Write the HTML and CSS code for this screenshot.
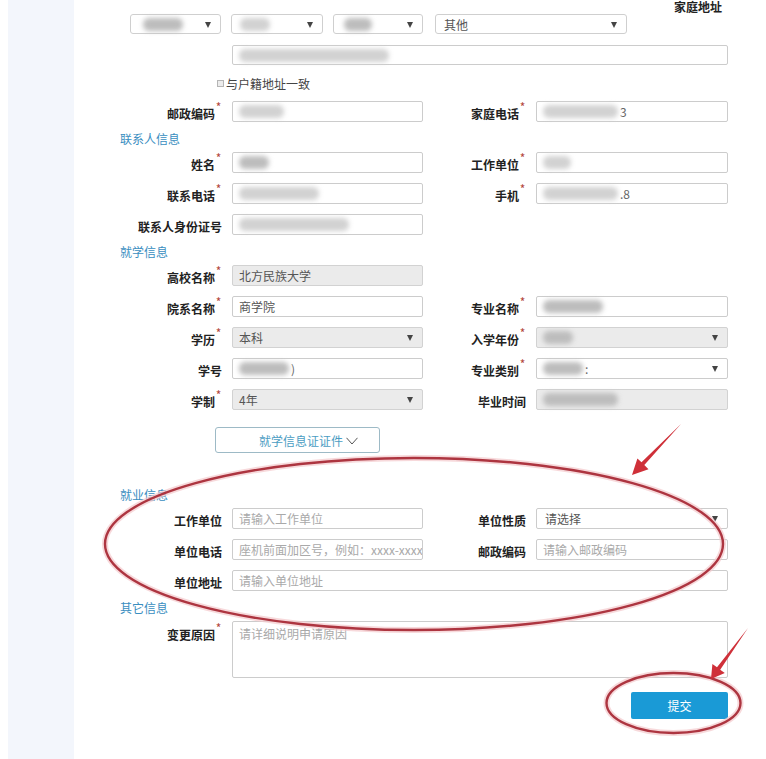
FILE: index.html
```html
<!DOCTYPE html>
<html lang="zh-CN">
<head>
<meta charset="utf-8">
<title>变更申请</title>
<link rel="stylesheet" href="styles.css">
</head>
<body>
<div class="page">
  <aside class="strip"></aside>
  <main class="form">
    <div class="top-label">家庭地址</div>

    <div class="selects">
      <div class="sel s1"><span class="blur w40"></span></div>
      <div class="sel s2"><span class="blur w30 light"></span></div>
      <div class="sel s3"><span class="blur w28"></span></div>
      <div class="sel s4">其他</div>
    </div>

    <div class="field addr"><span class="blur w150 light"></span></div>

    <div class="check-row"><span class="box"></span><span>与户籍地址一致</span></div>

    <div class="row first">
      <label class="lbl">邮政编码<span class="req">*</span></label>
      <div class="field"><span class="blur w45 light"></span></div>
      <label class="lbl">家庭电话<span class="req">*</span></label>
      <div class="field"><span class="blur w75 light"></span><span class="tail">3</span></div>
    </div>

    <div class="sec">联系人信息</div>
    <div class="row">
      <label class="lbl">姓名<span class="req">*</span></label>
      <div class="field"><span class="blur w30"></span></div>
      <label class="lbl">工作单位<span class="req">*</span></label>
      <div class="field"><span class="blur w28 light"></span></div>
    </div>
    <div class="row">
      <label class="lbl">联系电话<span class="req">*</span></label>
      <div class="field"><span class="blur w80 light"></span></div>
      <label class="lbl">手机<span class="req">*</span></label>
      <div class="field"><span class="blur w75 light"></span><span class="tail">.8</span></div>
    </div>
    <div class="row">
      <label class="lbl">联系人身份证号</label>
      <div class="field"><span class="blur w110 light"></span></div>
    </div>

    <div class="sec">就学信息</div>
    <div class="row">
      <label class="lbl">高校名称<span class="req">*</span></label>
      <div class="field dis">北方民族大学</div>
    </div>
    <div class="row">
      <label class="lbl">院系名称<span class="req">*</span></label>
      <div class="field">商学院</div>
      <label class="lbl">专业名称<span class="req">*</span></label>
      <div class="field"><span class="blur w60"></span></div>
    </div>
    <div class="row">
      <label class="lbl">学历<span class="req">*</span></label>
      <div class="field dis select">本科</div>
      <label class="lbl">入学年份<span class="req">*</span></label>
      <div class="field dis select"><span class="blur w30"></span></div>
    </div>
    <div class="row">
      <label class="lbl">学号</label>
      <div class="field"><span class="blur w50"></span><span class="tail">)</span></div>
      <label class="lbl">专业类别<span class="req">*</span></label>
      <div class="field select"><span class="blur w40"></span><span class="tail">:</span></div>
    </div>
    <div class="row">
      <label class="lbl">学制<span class="req">*</span></label>
      <div class="field dis select">4年</div>
      <label class="lbl">毕业时间</label>
      <div class="field dis"><span class="blur w75"></span></div>
    </div>

    <div class="toggle-wrap">
      <button class="toggle" type="button">就学信息证证件<svg class="chev" width="12" height="8" viewBox="0 0 12 8"><polyline points="0.5,0.8 6,7 11.5,0.8" fill="none" stroke="#555" stroke-width="1"/></svg></button>
    </div>

    <div class="sec emp">就业信息</div>
    <div class="row">
      <label class="lbl">工作单位</label>
      <div class="field"><span class="ph">请输入工作单位</span></div>
      <label class="lbl">单位性质</label>
      <div class="field select"><span class="val">请选择</span></div>
    </div>
    <div class="row">
      <label class="lbl">单位电话</label>
      <div class="field clip"><span class="ph">座机前面加区号，例如：xxxx-xxxx</span></div>
      <label class="lbl">邮政编码</label>
      <div class="field"><span class="ph">请输入邮政编码</span></div>
    </div>
    <div class="row">
      <label class="lbl">单位地址</label>
      <div class="field span3"><span class="ph">请输入单位地址</span></div>
    </div>

    <div class="sec">其它信息</div>
    <div class="row area">
      <label class="lbl">变更原因<span class="req">*</span></label>
      <div class="field span3 textarea"><span class="ph">请详细说明申请原因</span></div>
    </div>

    <div class="submit-row">
      <button class="submit" type="button">提交</button>
    </div>
  </main>

  <svg class="annot" width="766" height="759" viewBox="0 0 766 759">
    <g fill="none">
      <ellipse cx="414" cy="544" rx="309" ry="86" stroke="#f4c9cc" stroke-width="6" opacity="0.7"/>
      <ellipse cx="414" cy="544" rx="309" ry="86" stroke="#ad3540" stroke-width="2.4"/>
      <ellipse cx="673.5" cy="703" rx="67" ry="30" stroke="#f4c9cc" stroke-width="6" opacity="0.7"/>
      <ellipse cx="673.5" cy="703" rx="67" ry="30" stroke="#ad3540" stroke-width="2.4"/>
    </g>
    <polygon points="681,424 644.3,465.1 648.5,469.2 632,475 637.4,458.4 641.5,462.3" fill="#cf3039"/>
    <polygon points="748,628 720.2,669.7 724.8,673.0 711,679 712.4,663.9 717.0,667.3" fill="#cf3039"/>
  </svg>
</div>
</body>
</html>
```

FILE: styles.css
```css
* {
  box-sizing: border-box;
}

body {
  margin: 0;
  background: #ffffff;
  font-family: "Noto Sans CJK SC", "Liberation Sans", sans-serif;
  font-size: 12px;
  color: #222;
}

.page {
  position: relative;
  display: flex;
  width: 766px;
  height: 759px;
  padding-left: 8px;
  overflow: hidden;
}

.strip {
  flex: none;
  width: 66px;
  background: #f3f6fc;
}

.form {
  flex: none;
  width: 654px;
}

.top-label {
  height: 14px;
  line-height: 13px;
  text-align: right;
  padding-right: 6px;
  font-weight: bold;
}

.selects {
  display: flex;
  height: 20px;
  margin-left: 56px;
}

.sel {
  position: relative;
  height: 20px;
  border: 1px solid #cfcfcf;
  border-radius: 3px;
  display: flex;
  align-items: center;
  padding-left: 8px;
  color: #555;
  background: #fff;
}

.sel::after,
.field.select::after {
  content: "";
  position: absolute;
  right: 9px;
  top: 7px;
  border-left: 3.5px solid transparent;
  border-right: 3.5px solid transparent;
  border-top: 6px solid #444;
}

.s1 { width: 91px; margin-right: 10px; padding-left: 12px; }
.s2 { width: 92px; margin-right: 10px; }
.s3 { width: 90px; margin-right: 12px; padding-left: 10px; }
.s4 { width: 192px; }

.field {
  position: relative;
  height: 21px;
  border: 1px solid #cccccc;
  border-radius: 2px;
  display: flex;
  align-items: center;
  padding-left: 6px;
  color: #555;
  background: #fff;
  white-space: nowrap;
}

.field.addr {
  margin: 11px 0 0 158px;
  width: 496px;
  height: 20px;
}

.field.dis {
  background: #ebebeb;
  border-color: #d2d2d2;
}

.field.clip {
  overflow: hidden;
}

.field.span3 {
  grid-column: 2 / 5;
}

.field.textarea {
  height: 57px;
  align-items: flex-start;
  padding-top: 3px;
}

.ph {
  color: #a9a9a9;
}

.val {
  color: #555;
  padding-left: 2px;
}

.tail {
  color: #666;
  margin-left: 2px;
}

.blur {
  display: inline-block;
  flex: none;
  height: 13px;
  background: #bdbdbd;
  border-radius: 6px;
  filter: blur(2.5px);
}

.blur.light {
  background: #d2d2d2;
}

.w28 { width: 28px; }
.w30 { width: 30px; }
.w40 { width: 40px; }
.w45 { width: 45px; }
.w50 { width: 50px; }
.w60 { width: 60px; }
.w75 { width: 75px; }
.w80 { width: 80px; }
.w110 { width: 110px; }
.w150 { width: 150px; }

.check-row {
  display: flex;
  align-items: center;
  gap: 2px;
  height: 16px;
  margin: 10px 0 0 143px;
  color: #444;
}

.box {
  width: 7px;
  height: 7px;
  border: 1px solid #b5b5b5;
  background: #ececec;
}

.row {
  display: grid;
  grid-template-columns: 158px 191px 113px 192px;
  height: 21px;
  margin-bottom: 10px;
}

.row.first {
  margin-top: 10px;
}

.row.area {
  height: 57px;
}

.lbl {
  text-align: right;
  padding-right: 10px;
  padding-top: 2px;
  line-height: 21px;
  font-weight: bold;
  white-space: nowrap;
  color: #222;
}

.row.area .lbl {
  padding-top: 3px;
}

.req {
  display: inline-block;
  width: 7px;
  text-align: center;
  color: #b3473c;
  font-size: 12px;
  font-weight: normal;
  line-height: 10px;
  vertical-align: top;
  position: relative;
  top: -1px;
}

.sec {
  height: 20px;
  line-height: 14px;
  padding-left: 46px;
  color: #3a8ebf;
}

.sec.emp {
  margin-top: 35px;
}

.toggle-wrap {
  margin-top: 17px;
  padding-left: 141px;
}

.toggle {
  display: flex;
  align-items: center;
  justify-content: center;
  gap: 3px;
  width: 165px;
  height: 26px;
  padding: 0 0 0 22px;
  border: 1px solid #9dbac6;
  border-radius: 3px;
  background: #fff;
  color: #4b9dc3;
  font: inherit;
}

.chev {
  display: block;
  margin-top: 1px;
}

.submit-row {
  display: flex;
  justify-content: flex-end;
  margin-top: 14px;
}

.submit {
  width: 97px;
  height: 27px;
  border: none;
  border-radius: 2px;
  background: #1a9ad6;
  color: #fff;
  font: inherit;
}

.annot {
  position: absolute;
  left: 0;
  top: 0;
  pointer-events: none;
}
```
